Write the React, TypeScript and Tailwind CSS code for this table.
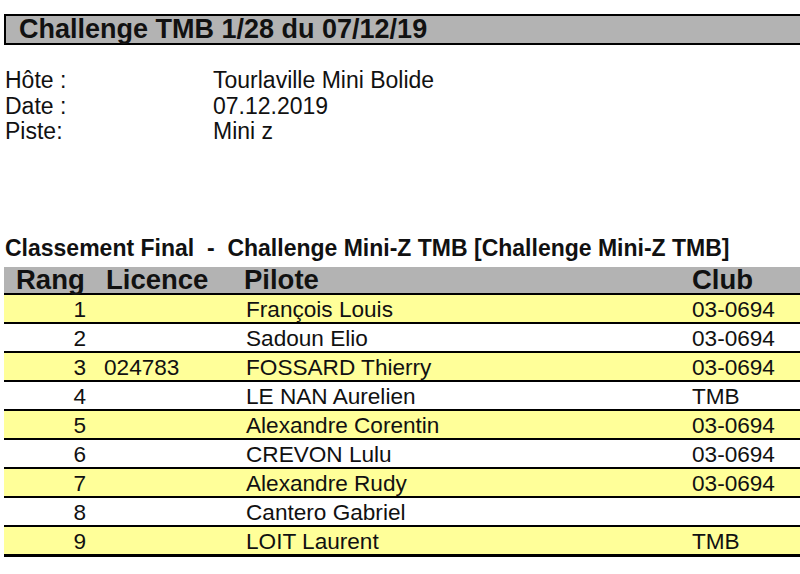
import React from 'react';

interface Row {
  rang: number;
  licence: string;
  pilote: string;
  club: string;
}

const rows: Row[] = [
  { rang: 1, licence: '', pilote: 'François Louis', club: '03-0694' },
  { rang: 2, licence: '', pilote: 'Sadoun Elio', club: '03-0694' },
  { rang: 3, licence: '024783', pilote: 'FOSSARD Thierry', club: '03-0694' },
  { rang: 4, licence: '', pilote: 'LE NAN Aurelien', club: 'TMB' },
  { rang: 5, licence: '', pilote: 'Alexandre Corentin', club: '03-0694' },
  { rang: 6, licence: '', pilote: 'CREVON Lulu', club: '03-0694' },
  { rang: 7, licence: '', pilote: 'Alexandre Rudy', club: '03-0694' },
  { rang: 8, licence: '', pilote: 'Cantero Gabriel', club: '' },
  { rang: 9, licence: '', pilote: 'LOIT Laurent', club: 'TMB' },
];

const info = [
  ['Hôte :', 'Tourlaville Mini Bolide'],
  ['Date :', '07.12.2019'],
  ['Piste:', 'Mini z'],
];

export default function App() {
  return (
    <div className="w-[800px] h-[574px] overflow-hidden bg-white text-[#111] font-['Liberation_Sans',Arial,sans-serif]">
      <div className="pt-[14px] pl-[4px]">
        <div className="h-[31px] border-2 border-r-0 border-black bg-[#b3b3b3] pl-[13px] flex items-center">
          <span className="text-[27px] font-bold leading-none">Challenge TMB 1/28 du 07/12/19</span>
        </div>
      </div>

      <div className="mt-[23px] pl-[5px]">
        {info.map(([label, value]) => (
          <div key={label} className="flex h-[25.5px] items-center text-[23px] leading-none">
            <span className="w-[208px]">{label}</span>
            <span>{value}</span>
          </div>
        ))}
      </div>

      <div className="mt-[90.5px] pl-[5px] h-[26px] flex items-center">
        <span className="text-[23px] font-bold leading-none whitespace-pre">
          {'Classement Final  -  Challenge Mini-Z TMB [Challenge Mini-Z TMB]'}
        </span>
      </div>

      <div className="mt-[6px] ml-[4px]">
        <div className="h-[28px] bg-[#b3b3b3] border-b-2 border-black flex items-end pb-0 text-[27.5px] font-bold leading-none">
          <span className="w-[88px] pl-[12px]">Rang</span>
          <span className="w-[152px] pl-[14px]">Licence</span>
          <span className="w-[448px] pl-0">Pilote</span>
          <span className="pl-0">Club</span>
        </div>
        {rows.map((r, i) => (
          <div
            key={r.rang}
            className={
              'flex items-center text-[22.6px] leading-none pt-[3px] border-black ' +
              (i % 2 === 0 ? 'bg-[#ffff99] ' : 'bg-white ') +
              (i === rows.length - 1 ? 'h-[30px] border-b-[3px]' : 'h-[29px] border-b-2')
            }
          >
            <span className="w-[82px] text-right">{r.rang}</span>
            <span className="w-[160px] pl-[18px]">{r.licence}</span>
            <span className="w-[446px]">{r.pilote}</span>
            <span>{r.club}</span>
          </div>
        ))}
      </div>
    </div>
  );
}
